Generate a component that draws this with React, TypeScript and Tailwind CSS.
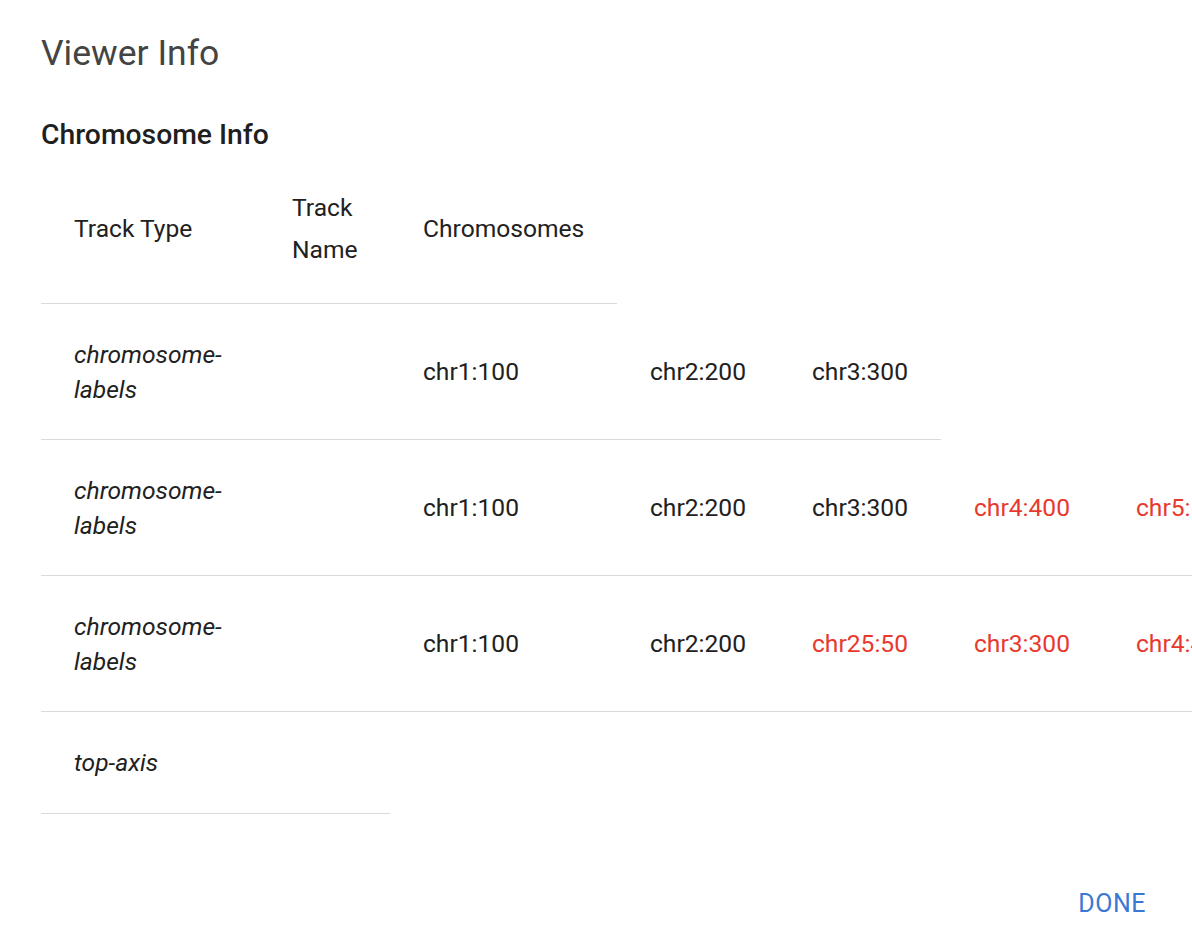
import React from 'react';

type Chrom = { name: string; bad?: boolean };

interface TrackRow {
  type: string;
  name?: string;
  chroms: Chrom[];
}

const rows: TrackRow[] = [
  {
    type: 'chromosome-labels',
    chroms: [{ name: 'chr1:100' }, { name: 'chr2:200' }, { name: 'chr3:300' }],
  },
  {
    type: 'chromosome-labels',
    chroms: [
      { name: 'chr1:100' },
      { name: 'chr2:200' },
      { name: 'chr3:300' },
      { name: 'chr4:400', bad: true },
      { name: 'chr5:500', bad: true },
      { name: 'chr6:600', bad: true },
    ],
  },
  {
    type: 'chromosome-labels',
    chroms: [
      { name: 'chr1:100' },
      { name: 'chr2:200' },
      { name: 'chr25:50', bad: true },
      { name: 'chr3:300', bad: true },
      { name: 'chr4:400', bad: true },
      { name: 'chr5:500', bad: true },
    ],
  },
  { type: 'top-axis', chroms: [] },
];

const ChromCell: React.FC<{ chrom: Chrom; first: boolean }> = ({ chrom, first }) => (
  <div
    className={`${first ? 'w-[227px]' : 'w-[162px]'} shrink-0 pl-[33px] pr-[16px] flex items-center whitespace-nowrap ${
      chrom.bad ? 'text-[#e8392e]' : 'text-[#212121]'
    }`}
  >
    {chrom.name}
  </div>
);

export default function App() {
  return (
    <div
      className="w-[1192px] h-[948px] overflow-hidden bg-white"
      style={{ fontFamily: 'Roboto, "Noto Sans", sans-serif' }}
    >
      <div className="pl-[41px] pt-[32px]">
        <h1 className="text-[35.5px] leading-[42px] text-[#444444] font-normal">Viewer Info</h1>
        <h2 className="mt-[45px] text-[28.3px] leading-[32px] font-medium text-[#1f1f1f]">Chromosome Info</h2>

        <div className="mt-[3px] flex flex-col items-start text-[24.6px]">
          {/* header */}
          <div className="flex w-max border-b border-[#dadada] text-[#212121] leading-[42px]">
            <div className="w-[218px] shrink-0 pl-[33px] pr-[12px] pt-[33px] pb-[32px] flex items-center">Track Type</div>
            <div className="w-[131px] shrink-0 pl-[33px] pr-[12px] pt-[33px] pb-[32px] flex items-center">Track Name</div>
            <div className="w-[227px] shrink-0 pl-[33px] pr-[12px] pt-[33px] pb-[32px] flex items-center">Chromosomes</div>
          </div>

          {rows.map((row, i) => (
            <div
              key={i}
              className={`flex w-max border-b border-[#dadada] leading-[35px] ${i === rows.length - 1 ? 'pb-[1px]' : ''}`}
            >
              <div className="w-[218px] shrink-0 pl-[33px] pr-[12px] pt-[33px] pb-[32px] italic text-[#212121]">
                {row.type}
              </div>
              <div className="w-[131px] shrink-0 pl-[33px] pr-[12px] pt-[33px] pb-[32px] text-[#212121]">
                {row.name ?? ''}
              </div>
              {row.chroms.map((c, j) => (
                <ChromCell key={j} chrom={c} first={j === 0} />
              ))}
            </div>
          ))}
        </div>
      </div>

      <div className="flex justify-end pr-[46px] mt-[75px]">
        <button className="text-[25px] leading-[30px] tracking-[0.5px] text-[#3b78d3] uppercase">Done</button>
      </div>
    </div>
  );
}
